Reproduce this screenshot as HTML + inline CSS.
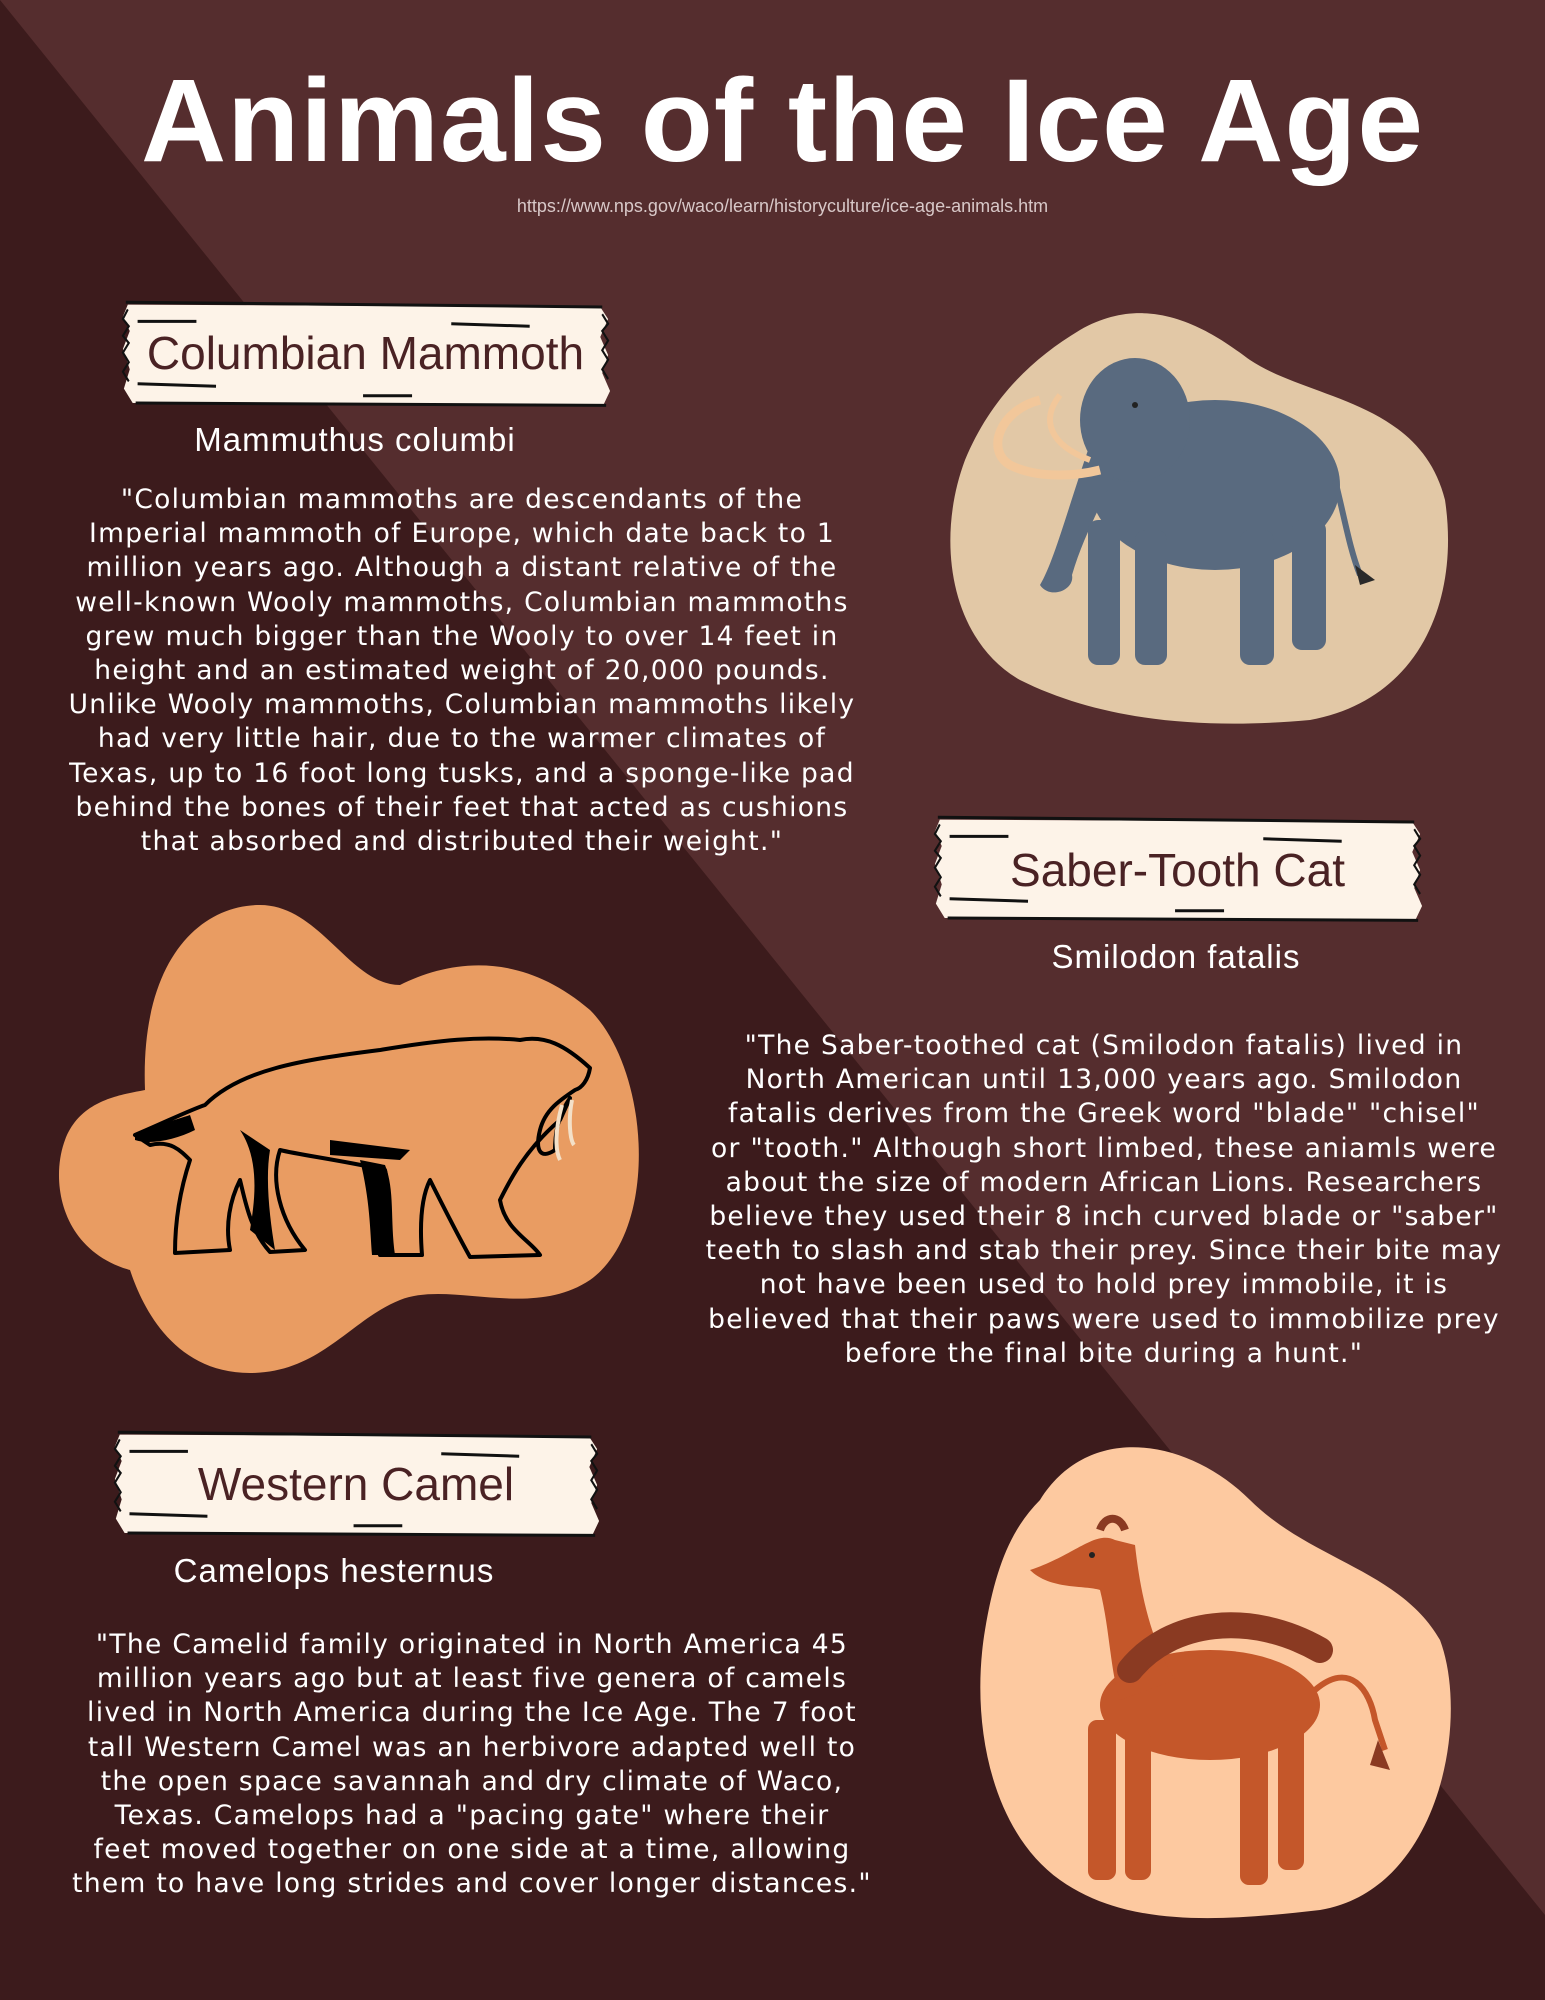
<!DOCTYPE html>
<html><head><meta charset="utf-8">
<style>
html,body{margin:0;padding:0}
body{width:1545px;height:2000px;position:relative;overflow:hidden;background:#552d2e;font-family:"DejaVu Sans","Liberation Sans",sans-serif;color:#fff}
svg{position:absolute;left:0;top:0}
.title{position:absolute;left:0;width:1545px;top:56px;text-align:center;font-family:"Liberation Sans",sans-serif;font-weight:bold;font-size:118px;letter-spacing:1px;line-height:130px;margin-left:10px}
.url{position:absolute;left:0;width:1545px;margin-left:10px;top:196px;text-align:center;font-size:18px;color:#d8c8c8;font-family:"Liberation Sans",sans-serif}
.bant{position:absolute;font-family:"Liberation Sans",sans-serif;font-size:46px;line-height:60px;color:#4a2224;text-align:center}
.sci{position:absolute;font-size:33px;line-height:40px;text-align:center;font-family:"Liberation Sans",sans-serif;letter-spacing:1px}
.p{position:absolute;text-align:center;font-size:26.5px;line-height:34.2px;letter-spacing:1.3px;white-space:nowrap;font-family:"DejaVu Sans",sans-serif}
</style></head><body>
<svg width="1545" height="2000">
<polygon points="0,0 1545,1915 1545,2000 0,2000" fill="#3c1b1c"/>
<path d="M1080,330 C1150,290 1210,330 1250,360 C1310,400 1420,400 1445,500 C1460,600 1420,700 1310,720 C1200,730 1100,720 1020,680 C950,640 935,540 965,460 C990,400 1030,360 1080,330 Z" fill="#e2c8a6"/>
<g fill="#596a7f">
<ellipse cx="1215" cy="485" rx="125" ry="85"/>
<ellipse cx="1135" cy="420" rx="55" ry="62"/>
<path d="M1095,430 C1070,500 1055,560 1040,585 C1050,600 1075,590 1072,575 C1085,530 1110,490 1120,460 Z"/>
<rect x="1088" y="520" width="32" height="145" rx="10"/>
<rect x="1135" y="530" width="32" height="135" rx="10"/>
<rect x="1240" y="530" width="34" height="135" rx="10"/>
<rect x="1292" y="520" width="34" height="130" rx="10"/>
</g>
<path d="M1335,480 C1345,520 1350,550 1360,575" stroke="#596a7f" stroke-width="6" fill="none"/>
<path d="M1355,565 l20,15 l-15,5 z" fill="#2a2a2a"/>
<path d="M1040,400 C1000,410 985,450 1010,465 C1040,480 1080,475 1100,470" stroke="#f2c79a" stroke-width="9" fill="none"/>
<path d="M1060,395 C1040,420 1050,445 1090,460" stroke="#f2c79a" stroke-width="6" fill="none"/>
<circle cx="1135" cy="405" r="3" fill="#222"/>

<path d="M145,1090 C140,960 200,905 260,905 C320,905 350,985 400,985 C450,960 520,950 590,1010 C650,1070 660,1230 590,1280 C530,1320 450,1280 400,1300 C350,1320 320,1373 250,1373 C170,1373 140,1300 130,1270 C60,1250 50,1180 65,1140 C80,1100 120,1095 145,1090 Z" fill="#e99c62"/>
<g stroke="#000" stroke-width="4" fill="#e99c62" stroke-linejoin="round">
<path d="M135,1135 C170,1120 190,1110 205,1105 C240,1070 300,1060 380,1050 C440,1040 480,1036 520,1040 C545,1035 565,1045 590,1068 C588,1080 582,1088 575,1090 C560,1100 545,1110 540,1130 C535,1150 540,1160 555,1150 C555,1125 562,1110 570,1098 L560,1120 C525,1150 510,1180 500,1200 C505,1230 530,1240 540,1255 L470,1257 C455,1230 440,1200 430,1180 C420,1200 420,1230 422,1255 L380,1255 C380,1220 390,1190 385,1170 C340,1160 300,1155 280,1150 C270,1180 280,1220 305,1250 L270,1252 C250,1230 245,1200 240,1180 C230,1200 225,1225 230,1250 L175,1253 C175,1220 180,1190 190,1160 C180,1150 170,1140 150,1145 Z"/>
</g>
<g fill="#000">
<path d="M240,1130 C260,1160 255,1200 250,1230 L275,1250 C270,1220 265,1180 270,1150 Z"/>
<path d="M360,1160 C370,1200 370,1230 372,1255 L395,1255 C390,1220 395,1190 385,1165 Z"/>
<path d="M330,1140 L410,1150 L400,1160 L330,1155 Z"/>
<path d="M135,1135 C155,1125 175,1120 190,1115 L195,1130 C175,1140 150,1145 135,1140 Z"/>
</g>
<path d="M562,1105 C555,1130 555,1150 560,1160 M572,1100 C568,1120 570,1140 574,1145" stroke="#f3e0c8" stroke-width="4" fill="none"/>

<path d="M1040,1500 C1090,1420 1190,1440 1250,1500 C1310,1560 1400,1570 1440,1640 C1470,1720 1440,1890 1320,1910 C1230,1920 1130,1930 1060,1880 C990,1830 970,1720 985,1630 C995,1570 1010,1530 1040,1500 Z" fill="#fdc9a0"/>
<g fill="#c4572a">
<ellipse cx="1210" cy="1705" rx="110" ry="55"/>
<path d="M1115,1540 C1095,1530 1075,1555 1030,1570 C1050,1590 1085,1585 1100,1590 C1110,1630 1110,1670 1120,1700 L1175,1680 C1150,1640 1140,1590 1135,1545 Z"/>
<rect x="1088" y="1720" width="28" height="160" rx="9"/>
<rect x="1125" y="1730" width="26" height="150" rx="9"/>
<rect x="1240" y="1730" width="28" height="155" rx="9"/>
<rect x="1278" y="1720" width="26" height="150" rx="9"/>
</g>
<path d="M1315,1690 C1350,1660 1370,1690 1375,1720 L1385,1750" stroke="#c4572a" stroke-width="6" fill="none"/>
<path d="M1378,1740 l12,30 l-20,-5 z" fill="#8a3a22"/>
<path d="M1130,1670 C1170,1620 1250,1610 1320,1650" stroke="#8a3a22" stroke-width="26" fill="none" stroke-linecap="round"/>
<path d="M1100,1530 C1105,1515 1120,1515 1125,1530" stroke="#8a3a22" stroke-width="8" fill="none"/>
<circle cx="1092" cy="1555" r="3" fill="#222"/>
</svg>

<div class="title">Animals of the Ice Age</div>
<div class="url">https://www.nps.gov/waco/learn/historyculture/ice-age-animals.htm</div>

<svg style="left:118px;top:295px" width="495" height="120" viewBox="0 0 505 100" preserveAspectRatio="none">
<path d="M10,8 L492,10 L500,20 L492,35 L500,50 L494,65 L502,80 L495,92 L15,90 L6,78 L12,62 L5,45 L12,30 L5,18 Z" fill="#fdf3e8"/>
<path d="M8,6 L494,10 M18,90 L498,92 M20,22 L80,22 M340,24 L420,26 M20,74 L100,76 M250,84 L300,84" stroke="#111" stroke-width="2.5" fill="none"/>
<path d="M10,12 l-5,8 l6,6 l-6,8 l6,6 l-6,8 l6,8 l-6,8 l6,8 M494,16 l6,8 l-6,6 l6,8 l-6,8 l6,8 l-6,8 l6,8" stroke="#111" stroke-width="2" fill="none"/>
</svg>
<div class="bant" style="left:118px;width:495px;top:323px">Columbian Mammoth</div>
<div class="sci" style="left:155px;width:400px;top:420px">Mammuthus columbi</div>
<div class="p" style="left:62px;width:800px;top:483px">"Columbian mammoths are descendants of the<br>Imperial mammoth of Europe, which date back to 1<br>million years ago. Although a distant relative of the<br>well-known Wooly mammoths, Columbian mammoths<br>grew much bigger than the Wooly to over 14 feet in<br>height and an estimated weight of 20,000 pounds.<br>Unlike Wooly mammoths, Columbian mammoths likely<br>had very little hair, due to the warmer climates of<br>Texas, up to 16 foot long tusks, and a sponge-like pad<br>behind the bones of their feet that acted as cushions<br>that absorbed and distributed their weight."</div>

<svg style="left:930px;top:810px" width="495" height="120" viewBox="0 0 505 100" preserveAspectRatio="none">
<path d="M10,8 L492,10 L500,20 L492,35 L500,50 L494,65 L502,80 L495,92 L15,90 L6,78 L12,62 L5,45 L12,30 L5,18 Z" fill="#fdf3e8"/>
<path d="M8,6 L494,10 M18,90 L498,92 M20,22 L80,22 M340,24 L420,26 M20,74 L100,76 M250,84 L300,84" stroke="#111" stroke-width="2.5" fill="none"/>
<path d="M10,12 l-5,8 l6,6 l-6,8 l6,6 l-6,8 l6,8 l-6,8 l6,8 M494,16 l6,8 l-6,6 l6,8 l-6,8 l6,8 l-6,8 l6,8" stroke="#111" stroke-width="2" fill="none"/>
</svg>
<div class="bant" style="left:930px;width:495px;top:840px">Saber-Tooth Cat</div>
<div class="sci" style="left:976px;width:400px;top:937px">Smilodon fatalis</div>
<div class="p" style="left:694px;width:820px;top:1029px">"The Saber-toothed cat (Smilodon fatalis) lived in<br>North American until 13,000 years ago. Smilodon<br>fatalis derives from the Greek word "blade" "chisel"<br>or "tooth." Although short limbed, these aniamls were<br>about the size of modern African Lions. Researchers<br>believe they used their 8 inch curved blade or "saber"<br>teeth to slash and stab their prey. Since their bite may<br>not have been used to hold prey immobile, it is<br>believed that their paws were used to immobilize prey<br>before the final bite during a hunt."</div>

<svg style="left:110px;top:1425px" width="492" height="120" viewBox="0 0 505 100" preserveAspectRatio="none">
<path d="M10,8 L492,10 L500,20 L492,35 L500,50 L494,65 L502,80 L495,92 L15,90 L6,78 L12,62 L5,45 L12,30 L5,18 Z" fill="#fdf3e8"/>
<path d="M8,6 L494,10 M18,90 L498,92 M20,22 L80,22 M340,24 L420,26 M20,74 L100,76 M250,84 L300,84" stroke="#111" stroke-width="2.5" fill="none"/>
<path d="M10,12 l-5,8 l6,6 l-6,8 l6,6 l-6,8 l6,8 l-6,8 l6,8 M494,16 l6,8 l-6,6 l6,8 l-6,8 l6,8 l-6,8 l6,8" stroke="#111" stroke-width="2" fill="none"/>
</svg>
<div class="bant" style="left:110px;width:492px;top:1454px">Western Camel</div>
<div class="sci" style="left:134px;width:400px;top:1551px">Camelops hesternus</div>
<div class="p" style="left:62px;width:820px;top:1628px">"The Camelid family originated in North America 45<br>million years ago but at least five genera of camels<br>lived in North America during the Ice Age. The 7 foot<br>tall Western Camel was an herbivore adapted well to<br>the open space savannah and dry climate of Waco,<br>Texas. Camelops had a "pacing gate" where their<br>feet moved together on one side at a time, allowing<br>them to have long strides and cover longer distances."</div>
</body></html>
